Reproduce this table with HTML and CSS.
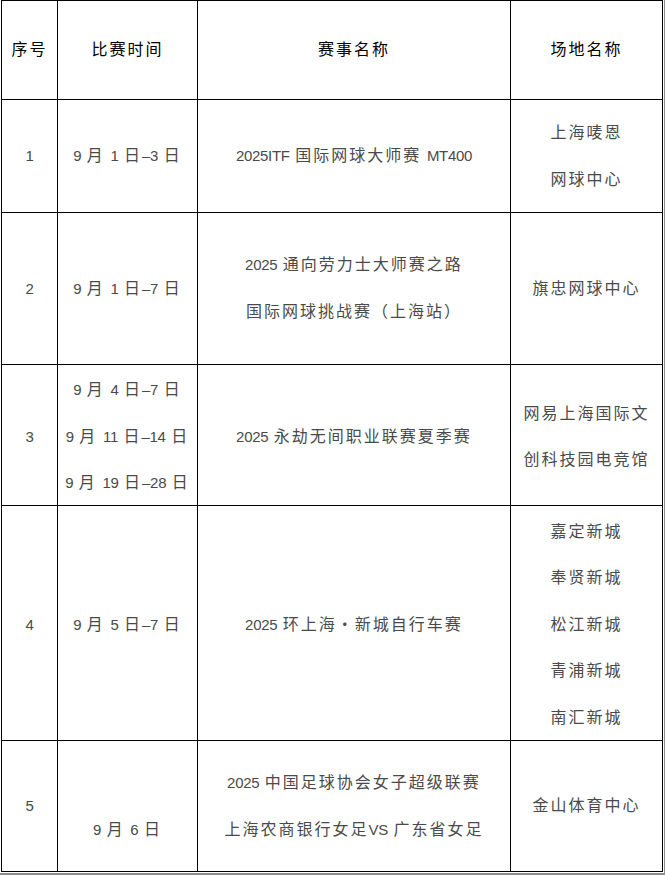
FILE: index.html
```html
<!DOCTYPE html>
<html lang="zh-CN">
<head>
<meta charset="utf-8">
<title>赛事安排</title>
<link rel="stylesheet" href="styles.css">
</head>
<body>
<div class="frame">
<table class="schedule">
  <colgroup>
    <col class="c-no">
    <col class="c-date">
    <col class="c-name">
    <col class="c-venue">
  </colgroup>
  <thead>
    <tr class="r-head">
      <th>序号</th>
      <th>比赛时间</th>
      <th>赛事名称</th>
      <th>场地名称</th>
    </tr>
  </thead>
  <tbody>
    <tr class="r1">
      <td><span class="n">1</span></td>
      <td><span class="n">9</span> 月 <span class="n">1</span> 日<span class="n">–3</span> 日</td>
      <td><span class="n">2025ITF</span> 国际网球大师赛 <span class="n">MT400</span></td>
      <td>上海唛恩<br>网球中心</td>
    </tr>
    <tr class="r2">
      <td><span class="n">2</span></td>
      <td><span class="n">9</span> 月 <span class="n">1</span> 日<span class="n">–7</span> 日</td>
      <td><span class="n">2025</span> 通向劳力士大师赛之路<br>国际网球挑战赛（上海站）</td>
      <td>旗忠网球中心</td>
    </tr>
    <tr class="r3">
      <td><span class="n">3</span></td>
      <td><span class="n">9</span> 月 <span class="n">4</span> 日<span class="n">–7</span> 日<br><span class="n">9</span> 月 <span class="n">11</span> 日<span class="n">–14</span> 日<br><span class="n">9</span> 月 <span class="n">19</span> 日<span class="n">–28</span> 日</td>
      <td><span class="n">2025</span> 永劫无间职业联赛夏季赛</td>
      <td>网易上海国际文<br>创科技园电竞馆</td>
    </tr>
    <tr class="r4">
      <td><span class="n">4</span></td>
      <td><span class="n">9</span> 月 <span class="n">5</span> 日<span class="n">–7</span> 日</td>
      <td><span class="n">2025</span> 环上海・新城自行车赛</td>
      <td>嘉定新城<br>奉贤新城<br>松江新城<br>青浦新城<br>南汇新城</td>
    </tr>
    <tr class="r5">
      <td><span class="n">5</span></td>
      <td class="low"><span class="n">9</span> 月 <span class="n">6</span> 日</td>
      <td><span class="n">2025</span> 中国足球协会女子超级联赛<br>上海农商银行女足<span class="n">VS</span> 广东省女足</td>
      <td>金山体育中心</td>
    </tr>
  </tbody>
</table>
</div>
</body>
</html>
```
FILE: styles.css
```css
html, body {
  margin: 0;
  padding: 0;
  background: #ffffff;
}

.frame {
  display: inline-block;
  padding: 0 1px 1px 1px;
  border-right: 1px solid #8c8c8c;
  border-bottom: 2px solid #8c8c8c;
}

.schedule {
  border-collapse: collapse;
  table-layout: fixed;
  width: 662px;
  font-family: "Noto Sans CJK SC", sans-serif;
  font-size: 16px;
  letter-spacing: 2px;
}

.c-no { width: 56px; }
.c-date { width: 140px; }
.c-name { width: 313px; }
.c-venue { width: 152px; }

.schedule th,
.schedule td {
  border: 1px solid #000;
  padding: 0 0 3px 0;
  text-align: center;
  vertical-align: middle;
  line-height: 47px;
  white-space: nowrap;
}

.schedule th {
  font-weight: 400;
  color: #000;
}

.schedule td {
  color: #4a4a4a;
}

.n {
  font-family: "Liberation Sans", sans-serif;
  font-size: 15px;
  letter-spacing: -0.3px;
  line-height: 0;
}

.r-head { height: 99px; }
.r1 { height: 113px; }
.r2 { height: 152px; }
.r3 { height: 141px; }
.r4 { height: 235px; }
.r5 { height: 131px; }

.r3 td {
  line-height: 46.4px;
  padding-bottom: 0;
}

.r4 td {
  line-height: 46.6px;
  padding-bottom: 0;
}

.schedule td.low {
  padding-top: 47px;
}
```
